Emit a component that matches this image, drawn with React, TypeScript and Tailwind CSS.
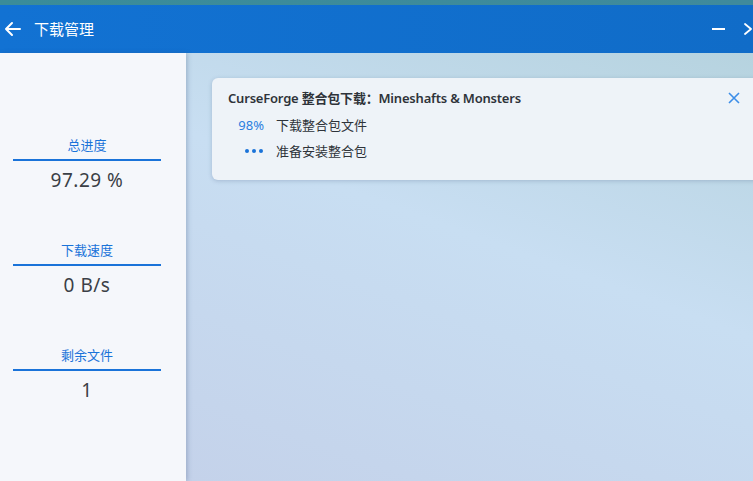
import React from 'react';

const stats = [
    { label: '总进度', value: '97.29 %' },
    { label: '下载速度', value: '0 B/s' },
    { label: '剩余文件', value: '1' },
];

export default function App() {
    return (
        <div
            className="w-[753px] h-[481px] overflow-hidden flex flex-col"
            style={{ fontFamily: '"Noto Sans", "Noto Sans CJK SC", sans-serif' }}
        >
            <div className="h-[5px] bg-gradient-to-r from-[#3a8c99] to-[#3f8a9c] shrink-0" />
            <div className="h-[48px] shrink-0 bg-gradient-to-r from-[#1272d3] to-[#106cc8] flex items-center text-white relative">
                <svg width="18" height="16" viewBox="0 0 18 16" className="ml-[4px]" fill="none" stroke="white" strokeWidth="2" strokeLinecap="round" strokeLinejoin="round">
                    <path d="M16 8H2M8 2L2 8l6 6" />
                </svg>
                <span className="ml-[12px] text-[15px] leading-none">下载管理</span>
                <div className="ml-auto flex items-center">
                    <div className="w-[13px] h-[2px] bg-white mr-[18px]" />
                    <svg width="10" height="12" viewBox="0 0 10 12" fill="none" stroke="white" strokeWidth="1.8" strokeLinecap="round">
                        <path d="M2 1l6 5M2 11l6-5" />
                    </svg>
                </div>
            </div>
            <div className="flex-1 flex min-h-0">
                <div className="w-[186px] shrink-0 bg-[#f5f7fb] shadow-[2px_0_4px_rgba(60,80,120,0.25)] z-10 pt-[82px]">
                    <div className="w-[174px] flex flex-col gap-[47px]">
                        {stats.map(s => (
                            <div key={s.label} className="flex flex-col items-center">
                                <div className="text-[13px] text-[#1a73d9] leading-[20px]">{s.label}</div>
                                <div className="w-[148px] h-[2px] bg-[#1a73d9] mt-[4px]" />
                                <div className="text-[19px] text-[#3b3f46] leading-[26px] mt-[6px] tracking-[0.5px]">{s.value}</div>
                            </div>
                        ))}
                    </div>
                </div>
                <div className="flex-1 bg-[linear-gradient(200deg,#b6d3df_0%,#c8def2_45%,#c4d2ea_100%)] pt-[25px] pl-[26px]">
                    <div className="w-[545px] h-[102px] rounded-l-[6px] bg-[#eef3f8] shadow-[0_1px_4px_rgba(60,80,120,0.25)] pl-[16px] pt-[10px] relative">
                        <div className="text-[13px] font-semibold text-[#2e333a] leading-[20px] tracking-[-0.2px]">
                            CurseForge 整合包下载：Mineshafts &amp; Monsters
                        </div>
                        <div className="flex items-center mt-[8px] text-[13px] leading-[18px]">
                            <span className="w-[48px] text-right pr-[12px] text-[#2a7fe0]">98%</span>
                            <span className="text-[#2e333a]">下载整合包文件</span>
                        </div>
                        <div className="flex items-center mt-[8px] text-[13px] leading-[18px]">
                            <span className="w-[48px] flex justify-end pr-[13px] gap-[3px]">
                                <span className="w-[4px] h-[4px] rounded-full bg-[#1a73d9]" />
                                <span className="w-[4px] h-[4px] rounded-full bg-[#1a73d9]" />
                                <span className="w-[4px] h-[4px] rounded-full bg-[#1a73d9]" />
                            </span>
                            <span className="text-[#2e333a]">准备安装整合包</span>
                        </div>
                        <svg width="12" height="12" viewBox="0 0 12 12" className="absolute right-[17px] top-[14px]" fill="none" stroke="#3c8ee8" strokeWidth="1.6">
                            <path d="M1 1l10 10M11 1L1 11" />
                        </svg>
                    </div>
                </div>
            </div>
        </div>
    );
}
